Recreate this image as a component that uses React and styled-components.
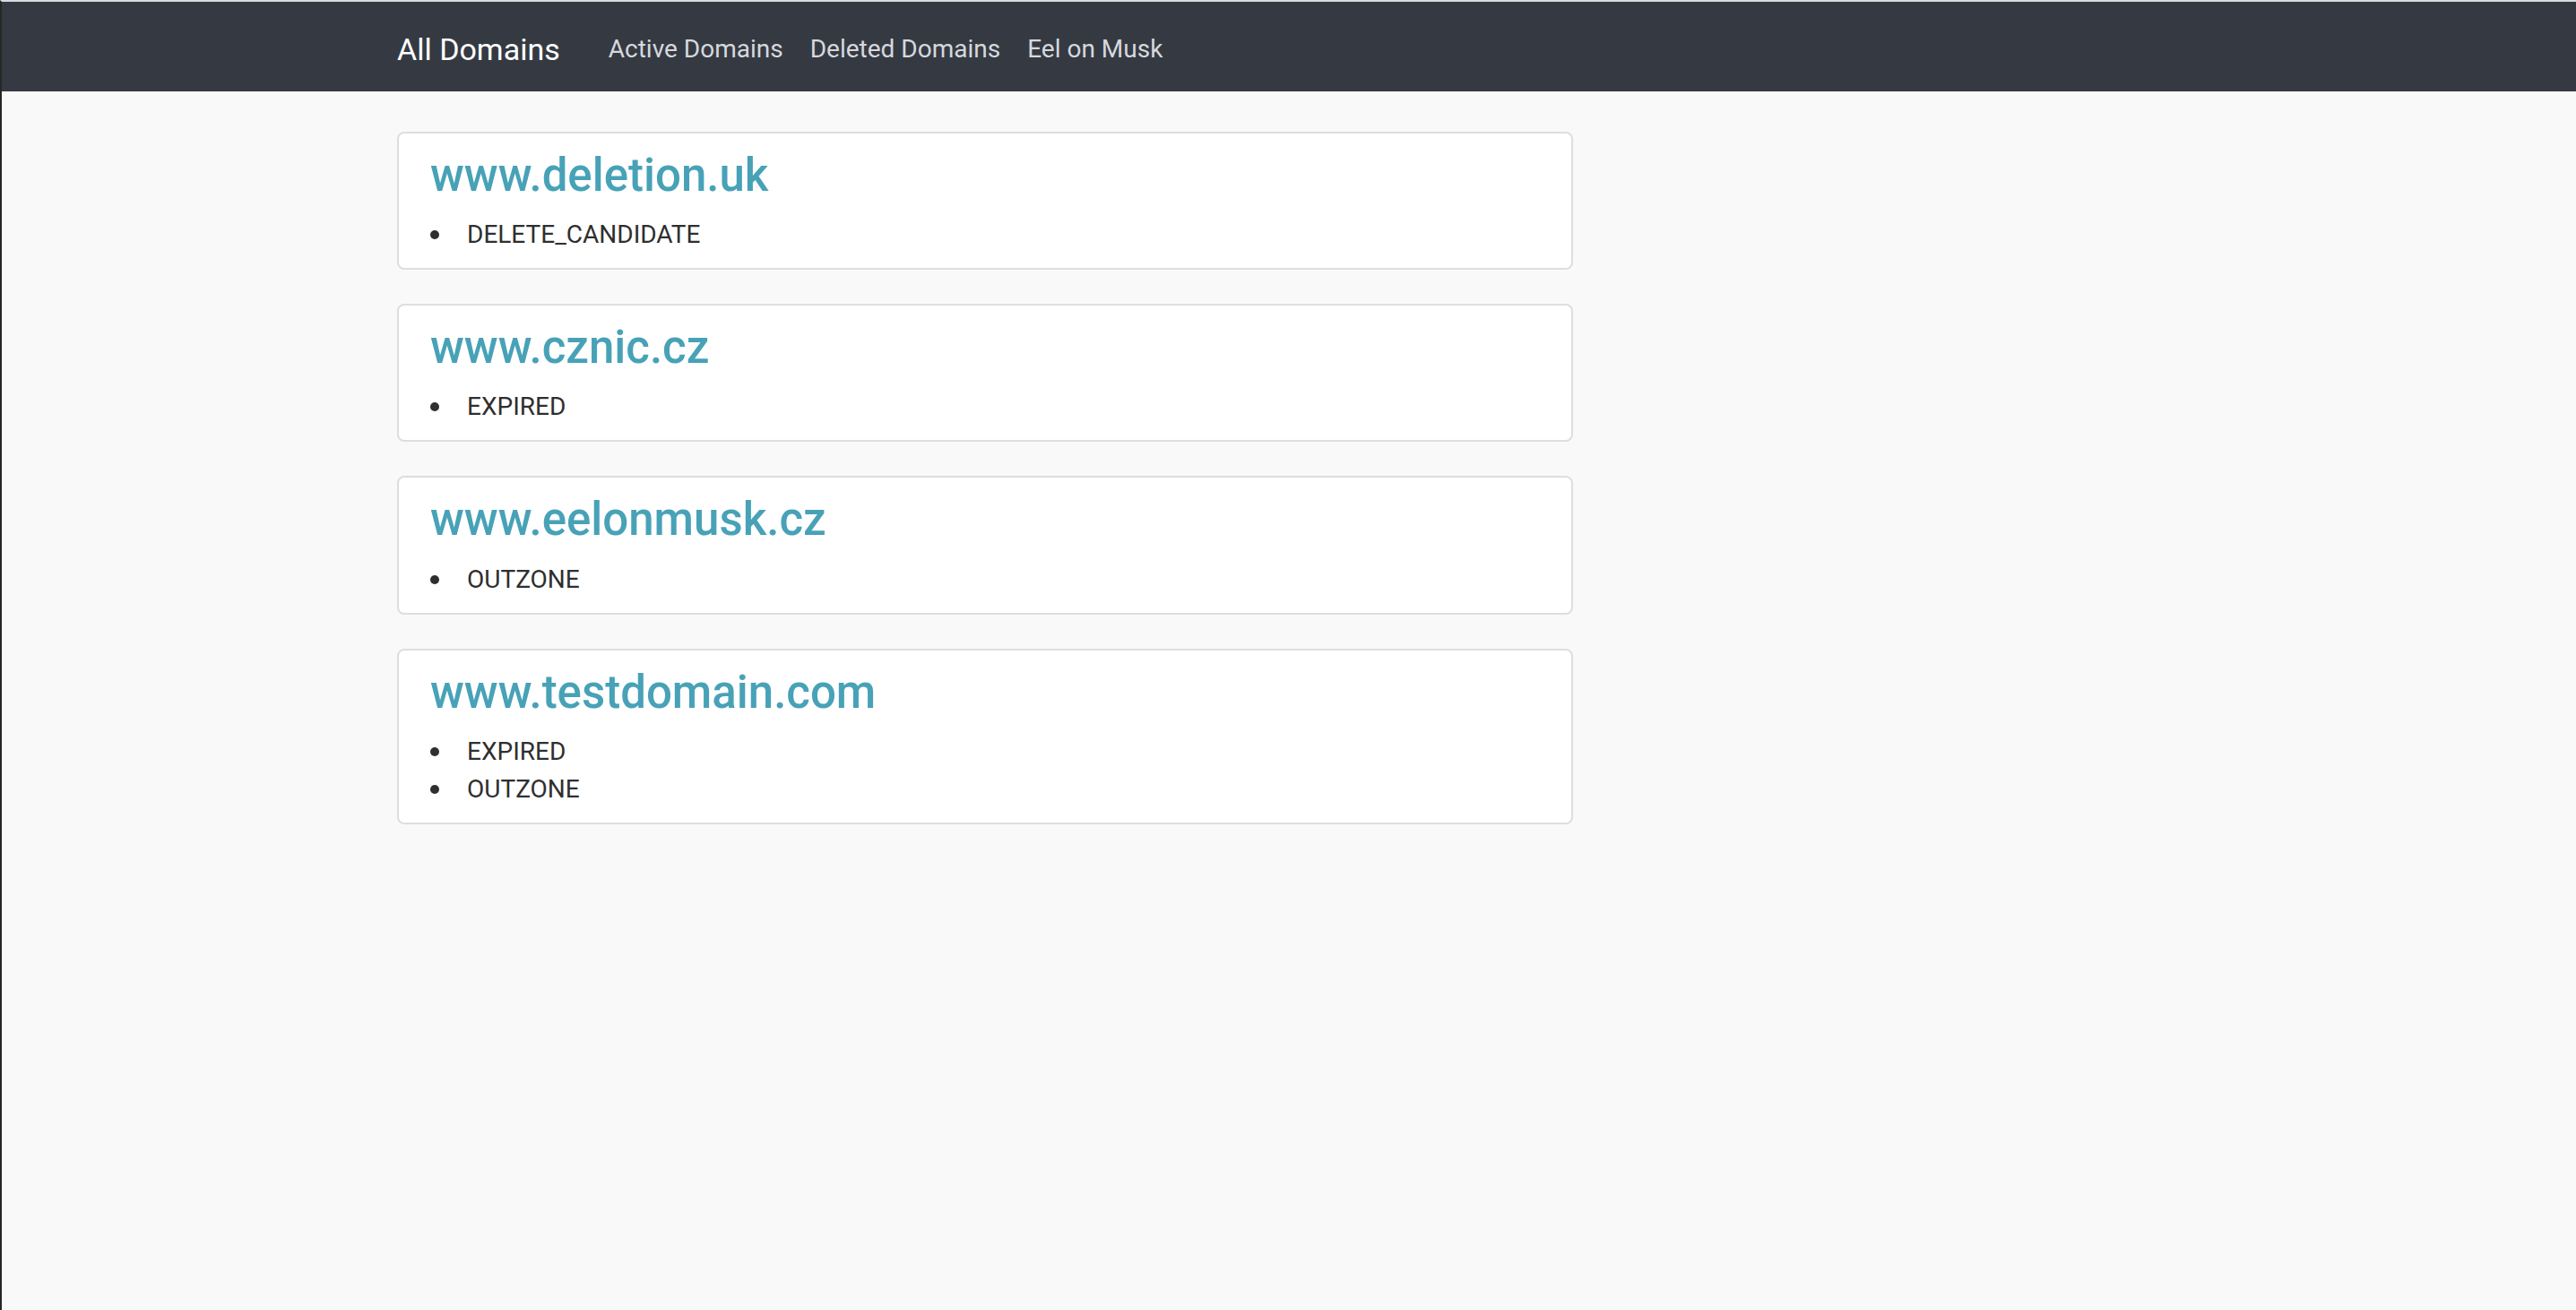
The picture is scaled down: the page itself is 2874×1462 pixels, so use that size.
import React from 'react';
import styled, { createGlobalStyle } from 'styled-components';

const GlobalStyle = createGlobalStyle`
  html {
    background: #f9f9f9;
  }
  body {
    margin: 0;
    min-height: 100vh;
    box-sizing: border-box;
    background: #f9f9f9;
    border-top: 2px solid #d9dadd;
    border-left: 2px solid #262626;
    font-family: Roboto, "Liberation Sans", sans-serif;
    color: #333;
  }
`;

const StyledNavbar = styled.nav`
  height: 100px;
  box-sizing: border-box;
  padding-top: 6px;
  background: #353a42;
  display: flex;
  align-items: center;
`;

const StyledContainer = styled.div`
  width: 1990px;
  margin: 0 auto;
  display: flex;
  align-items: ${props => (props.column ? 'flex-start' : 'center')};
  flex-direction: ${props => (props.column ? 'column' : 'row')};
  gap: ${props => (props.column ? '38px' : '0')};
  padding-top: ${props => (props.column ? '45px' : '0')};
`;

const StyledBrand = styled.a`
  font-size: 34px;
  line-height: 1.5;
  color: #fff;
  text-decoration: none;
  margin-right: 39px;
`;

const StyledNavLink = styled.a`
  font-size: 28px;
  line-height: 42px;
  padding: 0 15px;
  color: #d6d8de;
  text-decoration: none;
`;

const StyledCard = styled.div`
  width: 1312px;
  box-sizing: border-box;
  background: #fff;
  border: 2px solid #dedede;
  border-radius: 8px;
  padding: 16px 35px;
`;

const StyledTitle = styled.h3`
  margin: 0 0 14px 0;
  font-size: 51px;
  line-height: 1.22;
  font-weight: 500;
  color: #48a2b7;
`;

const StyledList = styled.ul`
  list-style: none;
  margin: 0;
  padding: 0;
`;

const StyledItem = styled.li`
  display: flex;
  align-items: center;
  font-size: 28px;
  line-height: 42px;
  color: #2f2f2f;

  &::before {
    content: '';
    width: 10px;
    height: 10px;
    border-radius: 50%;
    background: #2f2f2f;
    margin-right: 31px;
  }
`;

const domains = [
  { name: 'www.deletion.uk', states: ['DELETE_CANDIDATE'] },
  { name: 'www.cznic.cz', states: ['EXPIRED'] },
  { name: 'www.eelonmusk.cz', states: ['OUTZONE'] },
  { name: 'www.testdomain.com', states: ['EXPIRED', 'OUTZONE'] },
];

const App = () => {
  return (
    <>
      <GlobalStyle />
      <StyledNavbar>
        <StyledContainer>
          <StyledBrand href="#">All Domains</StyledBrand>
          <StyledNavLink href="#">Active Domains</StyledNavLink>
          <StyledNavLink href="#">Deleted Domains</StyledNavLink>
          <StyledNavLink href="#">Eel on Musk</StyledNavLink>
        </StyledContainer>
      </StyledNavbar>

      <StyledContainer column>
        {domains.map(domain => (
          <StyledCard key={domain.name}>
            <StyledTitle>{domain.name}</StyledTitle>
            <StyledList>
              {domain.states.map(state => (
                <StyledItem key={state}>{state}</StyledItem>
              ))}
            </StyledList>
          </StyledCard>
        ))}
      </StyledContainer>
    </>
  );
};

export default App;
